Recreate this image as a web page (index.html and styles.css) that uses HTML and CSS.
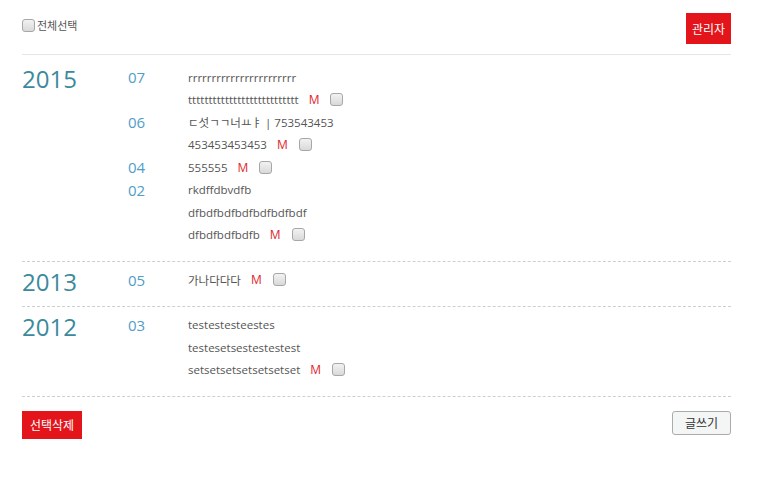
FILE: index.html
```html
<!DOCTYPE html>
<html lang="ko">
<head>
<meta charset="utf-8">
<link rel="stylesheet" href="styles.css">
</head>
<body>
<div class="board">
  <div class="board-head">
    <label class="select-all"><input type="checkbox" class="chk"><span>전체선택</span></label>
    <button class="btn-red btn-admin">관리자</button>
  </div>
  <div class="years">
    <section class="year first">
      <div class="year-num">2015</div>
      <div class="months">
        <div class="month">
          <div class="month-num">07</div>
          <ul class="posts">
            <li>rrrrrrrrrrrrrrrrrrrrrrr</li>
            <li>ttttttttttttttttttttttttttt <span class="m">M</span><input type="checkbox" class="chk"></li>
          </ul>
        </div>
        <div class="month">
          <div class="month-num">06</div>
          <ul class="posts">
            <li>ㄷ섯ㄱㄱ너ㅛㅑ | 753543453</li>
            <li>453453453453 <span class="m">M</span><input type="checkbox" class="chk"></li>
          </ul>
        </div>
        <div class="month">
          <div class="month-num">04</div>
          <ul class="posts">
            <li>555555 <span class="m">M</span><input type="checkbox" class="chk"></li>
          </ul>
        </div>
        <div class="month">
          <div class="month-num">02</div>
          <ul class="posts">
            <li>rkdffdbvdfb</li>
            <li>dfbdfbdfbdfbdfbdfbdf</li>
            <li>dfbdfbdfbdfb <span class="m">M</span><input type="checkbox" class="chk"></li>
          </ul>
        </div>
      </div>
    </section>
    <section class="year">
      <div class="year-num">2013</div>
      <div class="months">
        <div class="month">
          <div class="month-num">05</div>
          <ul class="posts">
            <li>가나다다다 <span class="m">M</span><input type="checkbox" class="chk"></li>
          </ul>
        </div>
      </div>
    </section>
    <section class="year">
      <div class="year-num">2012</div>
      <div class="months">
        <div class="month">
          <div class="month-num">03</div>
          <ul class="posts">
            <li>testestesteestes</li>
            <li>testesetsestestestest</li>
            <li>setsetsetsetsetsetset <span class="m">M</span><input type="checkbox" class="chk"></li>
          </ul>
        </div>
      </div>
    </section>
  </div>
  <div class="board-foot">
    <button class="btn-red btn-delete">선택삭제</button>
    <button class="btn-write">글쓰기</button>
  </div>
</div>
</body>
</html>
```
FILE: styles.css
```css
* { box-sizing: border-box; }
body {
  margin: 0;
  background: #fff;
  font-family: "Open Sans", "Noto Sans CJK KR", sans-serif;
  color: #555;
}
.board {
  width: 709px;
  margin-left: 22px;
}
.board-head {
  height: 55px;
  display: flex;
  justify-content: space-between;
  align-items: flex-start;
  border-bottom: 1px solid #e6e6e6;
}
.select-all {
  display: flex;
  align-items: center;
  margin-top: 17px;
  font-size: 11px;
  color: #555;
  font-family: "Noto Sans CJK KR", sans-serif;
}
.select-all .chk { margin: 0 2px 0 0; }
.chk {
  -webkit-appearance: none;
  appearance: none;
  width: 13px;
  height: 13px;
  margin: 0;
  border: 1px solid #a7a7a7;
  border-radius: 3px;
  background: linear-gradient(#f2f2f2, #d9d9d9);
  vertical-align: middle;
}
.btn-red {
  border: 0;
  background: #e3151b;
  color: #fff;
  font-family: "Noto Sans CJK KR", sans-serif;
  font-size: 12px;
  padding: 0;
  cursor: pointer;
}
.btn-admin {
  margin-top: 13px;
  width: 45px;
  height: 31px;
}
.years { margin-top: 4px; }
.year {
  display: flex;
  align-items: flex-start;
  padding: 6.5px 0 15px;
  border-bottom: 1px dashed #cfcfcf;
}
.year.first { padding-top: 7px; }
.year-num {
  width: 106px;
  height: 22.5px;
  font-size: 24px;
  line-height: 25px;
  color: #3b8a9c;
}
.months { flex: 1; }
.month { display: flex; }
.month-num {
  width: 60px;
  font-size: 15px;
  line-height: 22.5px;
  color: #4f9ec9;
}
.posts {
  list-style: none;
  margin: 0;
  padding: 0;
}
.posts li {
  height: 22.5px;
  display: flex;
  align-items: center;
  font-size: 11.5px;
  color: #555;
  white-space: pre;
}
.m {
  color: #e2252b;
  font-size: 12px;
  margin: 0 11px 0 7px;
}
.board-foot {
  display: flex;
  justify-content: space-between;
  align-items: flex-start;
  padding-top: 13.5px;
}
.btn-delete {
  width: 60px;
  height: 28px;
}
.btn-write {
  width: 59px;
  height: 24px;
  background: #f4f6f6;
  border: 1px solid #ababab;
  border-radius: 3px;
  font-family: "Noto Sans CJK KR", sans-serif;
  font-size: 12px;
  color: #333;
  padding: 0;
}
```
